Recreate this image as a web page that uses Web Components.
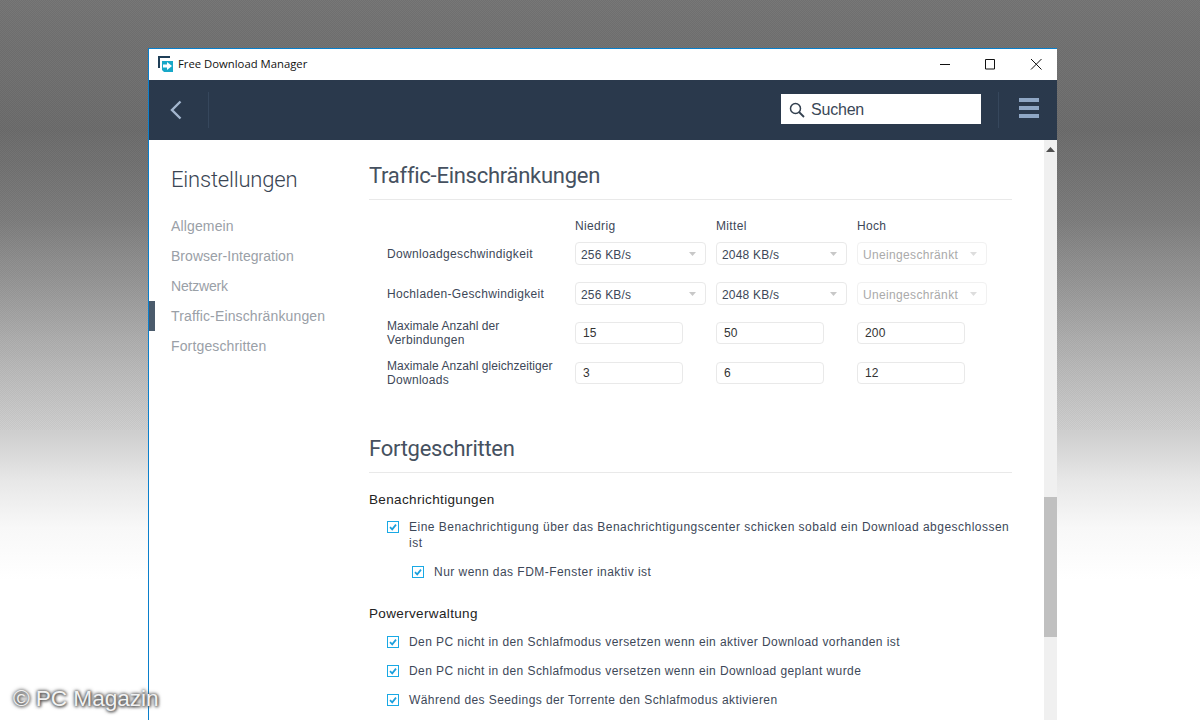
<!DOCTYPE html>
<html><head><meta charset="utf-8"><style>
html,body{margin:0;padding:0;height:720px;overflow:hidden}
</style></head><body>
<fdm-desktop>
<fdm-window>
<fdm-side slot="side"></fdm-side>
<fdm-traffic></fdm-traffic>
<fdm-advanced></fdm-advanced>
</fdm-window>
</fdm-desktop>
<script>
function def(name,html){customElements.define(name,class extends HTMLElement{constructor(){super();this.attachShadow({mode:'open'}).innerHTML=html;}});}
const sel=(v,d)=>`<fdm-select ${d?'disabled':''}>${v}</fdm-select>`;
const inp=v=>`<fdm-input>${v}</fdm-input>`;
const body=`font:12px/14px "Liberation Sans",Arial,sans-serif;color:#3d4858;letter-spacing:.34px`;
const hs=`h2{font:400 22px/30px Roboto,sans-serif;color:#465160;letter-spacing:-.27px;margin:0;padding:1px 0 8px;border-bottom:1px solid #e9e9e9}`;
def('fdm-desktop',`<style>
:host{display:block;width:1200px;height:720px;box-sizing:border-box;padding:48px 0 0 148px;overflow:hidden;position:relative;
background:linear-gradient(180deg,#747474 0,#6a6a6a 130px,#7c7c7c 220px,#9c9c9c 300px,#b8b8b8 367px,#d0d0d0 436px,#e8e8e8 482px,#f8f8f8 528px,#fff 580px)}
:host::before{content:"";position:absolute;left:0;top:0;width:1200px;height:430px;background:repeating-conic-gradient(rgba(0,0,0,.03) 0 25%,rgba(255,255,255,.03) 0 50%) 0 0/2px 2px}
::slotted(fdm-window){position:relative}
.mark{position:absolute;left:13px;top:683px;font:22.700px/30px "Liberation Sans",Arial,sans-serif;color:#f2f2f2;letter-spacing:-.1px;text-shadow:0 0 3px #555,0 0 4px #555,1px 1px 3px #666}
</style><slot></slot><div class="mark">© PC Magazin</div>`);
def('fdm-window',`<style>
:host{display:flex;flex-direction:column;width:909px;height:672px;box-sizing:border-box;background:#fff;border-left:1px solid #0a7fcb;border-top:1px solid #0a7fcb;overflow:hidden}
.title{height:31px;flex:none;display:flex;align-items:center;padding-left:9px;box-sizing:border-box;font:11.300px "Open Sans","Liberation Sans",sans-serif;color:#111}
.ttl{margin-bottom:2px}
.logo{width:16px;height:17px;margin-right:4px;display:block}
.wb{margin-left:auto;display:flex}
.wb svg{width:46px;height:30px;display:block}
.head{height:60px;flex:none;background:#2a394c;display:flex;align-items:center;padding-right:18px}
.back{width:53px;height:36px;padding-right:6px;border-right:1px solid #36475c;display:flex;align-items:center;justify-content:center}
.search{margin:0 0 2px auto;width:200px;height:30px;background:#fff;display:flex;align-items:center;box-sizing:border-box;padding:1px 0 0 8px;gap:6px;font:16px "Liberation Sans",Arial,sans-serif;letter-spacing:-.2px;color:#3a4757}
.div2{width:1px;height:36px;background:#36475c;margin:0 20px 0 17px}
.burger{margin-bottom:4px;display:block}
.main{flex:1;display:flex;min-height:0}
.content{flex:1;min-width:0;overflow:hidden;padding:0 32px 0 0;box-sizing:border-box}
.bar{width:13px;flex:none;background:#f0f0f0;display:flex;flex-direction:column}
.up{height:20px;display:flex;justify-content:center;padding-top:7px;box-sizing:border-box}
.thumb{height:140px;margin-top:337px;background:#c0c0c0}
</style>
<div class="title"><svg class="logo" viewBox="0 0 16 17"><path d="M1 12V1h11" fill="none" stroke="#1f3f58" stroke-width="2"/><path d="M4 5h11v11H6l-2-2z" fill="#18a8c8"/><path d="M5 8.500h4V6l5 4-5 4v-2.500H5z" fill="#fff"/></svg><span class="ttl">Free Download Manager</span>
<div class="wb"><svg viewBox="0 0 46 30"><path d="M21 14.500h10" stroke="#111" fill="none"/></svg><svg viewBox="0 0 46 30"><path d="M20.500 9.500h9v9.500h-9z" stroke="#111" fill="none"/></svg><svg viewBox="0 0 46 30"><path d="M20 9l10.500 10.500M30.500 9 20 19.500" stroke="#111" fill="none"/></svg></div></div>
<div class="head"><div class="back"><svg width="14" height="20" viewBox="0 0 14 20"><path d="M11.500 1.500 3 10l8.500 8.500" fill="none" stroke="#a3b6ce" stroke-width="2.400"/></svg></div>
<div class="search"><svg width="16" height="16" viewBox="0 0 16 16"><circle cx="6.500" cy="6.500" r="5" fill="none" stroke="#33404f" stroke-width="1.500"/><path d="M10 10l5 5" stroke="#33404f" stroke-width="1.800"/></svg>Suchen</div>
<div class="div2"></div>
<svg class="burger" width="20" height="20" viewBox="0 0 20 20"><path d="M0 0h20v4H0zM0 8h20v4H0zM0 16h20v4H0z" fill="#8fa7c5"/></svg></div>
<div class="main"><slot name="side"></slot><div class="content"><slot></slot></div>
<div class="bar"><div class="up"><svg width="9" height="5" viewBox="0 0 9 5"><path d="M4.500 0 9 5H0z" fill="#505050"/></svg></div><div class="thumb"></div></div></div>`);
def('fdm-side',`<style>
:host{display:block;width:220px;flex:none;padding-top:24px;box-sizing:border-box;font:14px/30px "Liberation Sans",Arial,sans-serif;letter-spacing:.14px;color:#9aa0a7}
h2{font:300 22px/30px Roboto,sans-serif;letter-spacing:-.2px;color:#3a4553;margin:0;padding:1px 0 0 22px;height:46px;box-sizing:border-box;margin-bottom:1px}
div{padding-left:22px;height:30px}
.on{border-left:6px solid #4b5b6c;padding-left:16px}
</style><h2>Einstellungen</h2><div>Allgemein</div><div style="letter-spacing:.03px">Browser-Integration</div><div style="letter-spacing:-.2px">Netzwerk</div><div class="on">Traffic-Einschränkungen</div><div>Fortgeschritten</div>`);
def('fdm-select',`<style>
:host{display:flex;align-items:center;justify-content:space-between;width:131px;height:23px;box-sizing:border-box;border:1px solid #e9e9e9;border-radius:4px;padding:2px 9px 0 5px;background:#fff;color:#3d4858;letter-spacing:.2px}
:host([disabled]){width:130px;border-color:#f1f1f1;color:#aaa;letter-spacing:.34px}
:host([disabled]) path{fill:#ddd}
svg{display:block;flex:none;margin-top:-2px}
</style><slot></slot><svg width="7" height="4" viewBox="0 0 7 4"><path d="M0 0h7L3.500 4z" fill="#c8c8c8"/></svg>`);
def('fdm-input',`<style>
:host{display:flex;align-items:center;width:108px;height:22px;box-sizing:border-box;border:1px solid #e9e9e9;border-radius:4px;padding-left:7px;background:#fff;color:#333;letter-spacing:.2px;margin-bottom:2px}
</style><slot></slot>`);
def('fdm-traffic',`<style>
:host{display:block;padding-top:20px;${body}}
${hs}
.g{display:grid;grid-template-columns:188px 141px 141px 141px;grid-template-rows:33.500px 40px 40px 40px 40px;padding-left:18px;align-items:center}
.hd{align-self:end;padding-bottom:1px}
.m{letter-spacing:.05px;margin-bottom:2px}
.m span{letter-spacing:.3px}
</style><h2>Traffic-Einschränkungen</h2><div class="g">
<div></div><div class="hd">Niedrig</div><div class="hd">Mittel</div><div class="hd">Hoch</div>
<div>Downloadgeschwindigkeit</div>${sel('256 KB/s')}${sel('2048 KB/s')}${sel('Uneingeschränkt',1)}
<div>Hochladen-Geschwindigkeit</div>${sel('256 KB/s')}${sel('2048 KB/s')}${sel('Uneingeschränkt',1)}
<div class="m">Maximale Anzahl der<br><span>Verbindungen</span></div>${inp(15)}${inp(50)}${inp(200)}
<div class="m">Maximale Anzahl gleichzeitiger<br><span>Downloads</span></div>${inp(3)}${inp(6)}${inp(12)}
</div>`);
def('fdm-check',`<style>
:host{display:flex;align-items:flex-start;gap:10px;font:12px/16px "Liberation Sans",Arial,sans-serif;color:#3d4858;letter-spacing:.42px}
.b{flex:none;width:10px;height:10px;border:1px solid #19a9e5;margin-top:2px;background:#fff}
svg{display:block;width:10px;height:10px}
</style><span class="b"><svg viewBox="0 0 10 10"><path d="M2 5.200 4.200 7.400 8 2.600" fill="none" stroke="#1c9fdc" stroke-width="1.700"/></svg></span><span><slot></slot></span>`);
def('fdm-advanced',`<style>
:host{display:block;padding-top:39.500px}
${hs}
h3{font:400 13.500px/16px "Liberation Sans",Arial,sans-serif;color:#222;letter-spacing:.35px;margin:0}
fdm-check{margin-left:18px}
.n{margin-left:43px}
</style><h2>Fortgeschritten</h2>
<h3 style="margin-top:19px">Benachrichtigungen</h3>
<fdm-check style="margin-top:11px;letter-spacing:.48px">Eine Benachrichtigung über das Benachrichtigungscenter schicken sobald ein Download abgeschlossen ist</fdm-check>
<fdm-check class="n" style="margin-top:13px;letter-spacing:.46px">Nur wenn das FDM-Fenster inaktiv ist</fdm-check>
<h3 style="margin-top:26px">Powerverwaltung</h3>
<fdm-check style="margin-top:12px">Den PC nicht in den Schlafmodus versetzen wenn ein aktiver Download vorhanden ist</fdm-check>
<fdm-check style="margin-top:13px">Den PC nicht in den Schlafmodus versetzen wenn ein Download geplant wurde</fdm-check>
<fdm-check style="margin-top:13px">Während des Seedings der Torrente den Schlafmodus aktivieren</fdm-check>`);
</script>
</body></html>
